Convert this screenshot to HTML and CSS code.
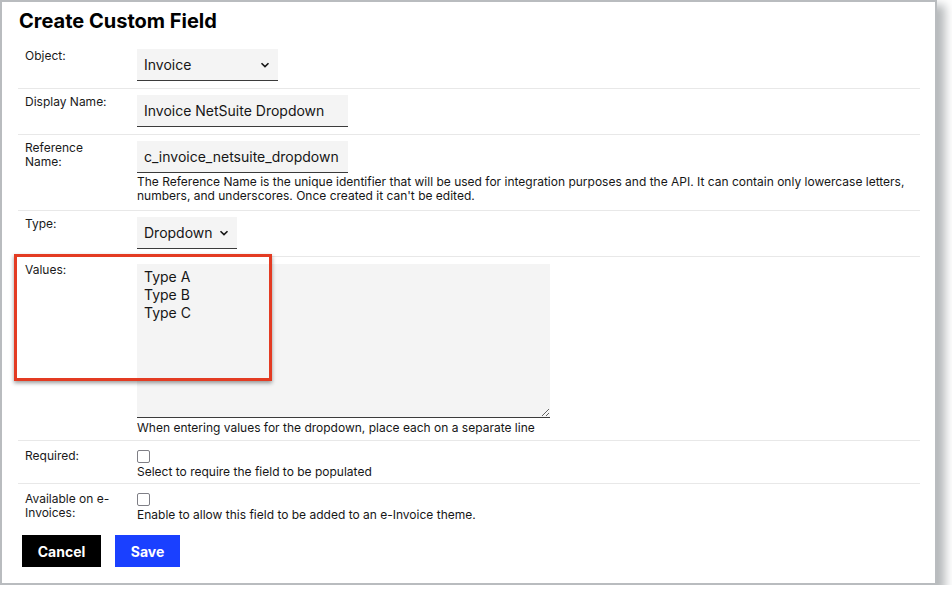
FILE: index.html
```html
<!DOCTYPE html>
<html lang="en">
<head>
<meta charset="utf-8">
<title>Create Custom Field</title>
<link rel="stylesheet" href="styles.css">
</head>
<body>
<div class="window">
  <h1 class="title">Create Custom Field</h1>

  <div class="row">
    <div class="label">Object:</div>
    <div class="content">
      <div class="field select select-object"><span>Invoice</span><svg class="chev" width="10" height="6" viewBox="0 0 10 6"><path d="M1.5 1.2 L5 4.6 L8.5 1.2" fill="none" stroke="#161616" stroke-width="1.6"/></svg></div>
    </div>
  </div>

  <div class="row">
    <div class="label">Display Name:</div>
    <div class="content">
      <div class="field text-field">Invoice NetSuite Dropdown</div>
    </div>
  </div>

  <div class="row">
    <div class="label">Reference<br>Name:</div>
    <div class="content">
      <div class="field text-field">c_invoice_netsuite_dropdown</div>
      <p class="help">The Reference Name is the unique identifier that will be used for integration purposes and the API. It can contain only lowercase letters, numbers, and underscores. Once created it can't be edited.</p>
    </div>
  </div>

  <div class="row">
    <div class="label">Type:</div>
    <div class="content">
      <div class="field select select-type"><span>Dropdown</span><svg class="chev" width="10" height="6" viewBox="0 0 10 6"><path d="M1.5 1.2 L5 4.6 L8.5 1.2" fill="none" stroke="#161616" stroke-width="1.6"/></svg></div>
    </div>
  </div>

  <div class="row row-values">
    <div class="label">Values:</div>
    <div class="content">
      <textarea class="values" readonly>Type A
Type B
Type C</textarea>
      <p class="help help-values">When entering values for the dropdown, place each on a separate line</p>
    </div>
  </div>

  <div class="row row-check">
    <div class="label">Required:</div>
    <div class="content">
      <span class="checkbox"></span>
      <p class="help help-check">Select to require the field to be populated</p>
    </div>
  </div>

  <div class="row row-check row-last">
    <div class="label">Available on e-<br>Invoices:</div>
    <div class="content">
      <span class="checkbox"></span>
      <p class="help help-check">Enable to allow this field to be added to an e-Invoice theme.</p>
    </div>
  </div>

  <div class="actions">
    <button class="btn btn-cancel" type="button">Cancel</button>
    <button class="btn btn-save" type="button">Save</button>
  </div>

  <div class="highlight"></div>
</div>
</body>
</html>
```

FILE: styles.css
```css
html, body {
  margin: 0;
  padding: 0;
  background: #ffffff;
}

body {
  font-family: Inter, "Noto Sans", "Liberation Sans", sans-serif;
  color: #161616;
}

.window {
  position: relative;
  box-sizing: border-box;
  width: 937px;
  height: 585px;
  background: #ffffff;
  border: 2px solid #b9bcbf;
  box-shadow: 6px 7px 9px 2px rgba(110, 115, 120, 0.5);
  padding: 7px 15px 0 16px;
}

.title {
  margin: 0 0 10px 0;
  padding-left: 1px;
  font-size: 20px;
  line-height: 24px;
  font-weight: 700;
  color: #000000;
}

.row {
  display: grid;
  grid-template-columns: 112px 1fr;
  padding: 6px 0 7px 7px;
  border-bottom: 1px solid #e8e8e8;
}

.row-last {
  border-bottom: none;
}

.label {
  font-size: 12px;
  line-height: 13.5px;
  color: #1a1a1a;
}

.content {
  min-width: 0;
}

.field {
  box-sizing: border-box;
  height: 32px;
  background: #f4f4f4;
  border-bottom: 1px solid #3b3b3b;
  font-size: 14px;
  color: #161616;
  padding: 0 7px;
  display: flex;
  align-items: center;
}

.text-field {
  width: 211px;
}

.select {
  justify-content: space-between;
}

.select-object {
  width: 141px;
}

.select-type {
  width: 100px;
}

.chev {
  display: block;
  margin-right: 1px;
}

.help {
  margin: 2px 0 0 0;
  font-size: 12px;
  line-height: 14px;
  color: #161616;
}

.row-values {
  padding-bottom: 5px;
}

.values {
  display: block;
  box-sizing: border-box;
  width: 413px;
  height: 154px;
  margin: 1px 0 0 0;
  padding: 4px 7px;
  border: none;
  border-bottom: 1px solid #3b3b3b;
  border-radius: 0;
  background: #f4f4f4;
  font-family: Inter, "Noto Sans", "Liberation Sans", sans-serif;
  font-size: 14px;
  line-height: 18px;
  color: #161616;
  outline: none;
}

.help-values {
  margin-top: 3px;
}

.row-check {
  padding-top: 8px;
  padding-bottom: 4px;
}

.checkbox {
  display: block;
  box-sizing: border-box;
  width: 13px;
  height: 13px;
  margin-top: 1px;
  border: 1px solid #7f7f86;
  border-radius: 2px;
  background: #ffffff;
}

.help-check {
  margin-top: 2px;
}

.actions {
  display: flex;
  gap: 14px;
  margin: 9px 0 0 4px;
}

.btn {
  height: 32px;
  border: none;
  border-radius: 0;
  font-family: Inter, "Noto Sans", "Liberation Sans", sans-serif;
  font-size: 14px;
  font-weight: 700;
  color: #ffffff;
  padding: 0;
  cursor: pointer;
}

.btn-cancel {
  width: 79px;
  background: #000000;
}

.btn-save {
  width: 65px;
  background: #1a40ff;
}

.highlight {
  position: absolute;
  left: 12px;
  top: 252px;
  box-sizing: border-box;
  width: 258px;
  height: 127px;
  border: 3px solid #e33b22;
  box-shadow: 0 2px 4px rgba(0, 0, 0, 0.4);
  pointer-events: none;
}
```
